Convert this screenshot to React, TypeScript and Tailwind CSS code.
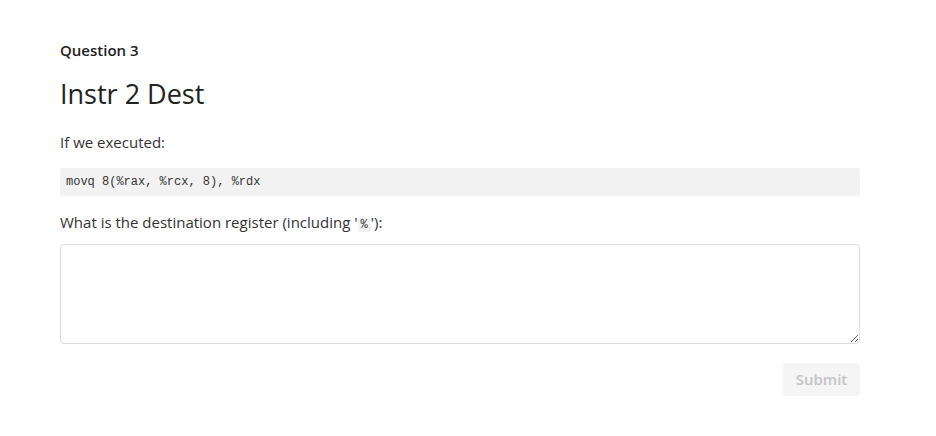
export default function App() {
  return (
    <div className="min-h-[436px] bg-white font-['Open_Sans',sans-serif] text-[#333]">
      <div className="mx-[60px] w-[800px] pt-[40px]">
        <div className="text-[15px] font-semibold leading-[20px] text-[#222]">Question 3</div>
        <h1 className="mt-[16px] text-[27px] leading-[36px] text-[#222]">Instr 2 Dest</h1>
        <p className="mt-[19px] text-[15px] leading-[22px]">If we executed:</p>
        <pre className="mt-[15px] h-[28px] rounded-[3px] bg-[#f2f2f2] px-[6px] font-['Liberation_Mono',monospace] text-[12px] leading-[28px] text-[#333]">
          movq 8(%rax, %rcx, 8), %rdx
        </pre>
        <p className="mt-[15px] text-[15px] leading-[22px]">
          What is the destination register (including '
          <code className="rounded-[2px] bg-[#f2f2f2] px-[3px] font-['Liberation_Mono',monospace] text-[12px]">%</code>
          '):
        </p>
        <textarea className="mt-[8px] block h-[100px] w-[800px] rounded-[4px] border border-[#dcdcdc] p-2 text-[15px] outline-none" />
        <div className="mt-[19px] flex justify-end">
          <button className="h-[33px] w-[77px] rounded-[4px] bg-[#f5f5f5] text-[15px] font-semibold text-[#c4c4c4]">
            Submit
          </button>
        </div>
      </div>
    </div>
  );
}
